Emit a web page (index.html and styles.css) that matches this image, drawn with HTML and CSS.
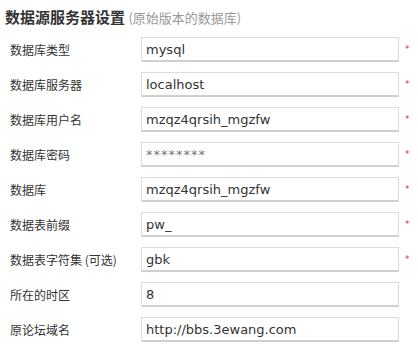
FILE: index.html
```html
<!DOCTYPE html>
<html>
<head>
<meta charset="utf-8">
<link rel="stylesheet" href="styles.css">
</head>
<body>
<div class="panel">
  <h3 class="title">数据源服务器设置 <span class="note">(原始版本的数据库)</span></h3>
  <div class="form">
    <div class="row"><label class="lbl">数据库类型</label><input class="field" type="text" value="mysql"><span class="req">*</span></div>
    <div class="row"><label class="lbl">数据库服务器</label><input class="field" type="text" value="localhost"><span class="req">*</span></div>
    <div class="row"><label class="lbl">数据库用户名</label><input class="field" type="text" value="mzqz4qrsih_mgzfw"><span class="req">*</span></div>
    <div class="row"><label class="lbl">数据库密码</label><input class="field pwd" type="text" value="********"><span class="req">*</span></div>
    <div class="row"><label class="lbl">数据库</label><input class="field" type="text" value="mzqz4qrsih_mgzfw"><span class="req">*</span></div>
    <div class="row"><label class="lbl">数据表前缀</label><input class="field" type="text" value="pw_"><span class="req">*</span></div>
    <div class="row"><label class="lbl">数据表字符集 (可选)</label><input class="field" type="text" value="gbk"><span class="req">*</span></div>
    <div class="row"><label class="lbl">所在的时区</label><input class="field" type="text" value="8"><span class="req"></span></div>
    <div class="row"><label class="lbl">原论坛域名</label><input class="field" type="text" value="http://bbs.3ewang.com"><span class="req"></span></div>
  </div>
</div>
</body>
</html>
```
FILE: styles.css
```css
html, body {
  margin: 0;
  padding: 0;
  background: #fff;
}
.panel {
  padding: 5px 0 0 0;
  font-family: "Noto Sans CJK SC", "DejaVu Sans", sans-serif;
  color: #333;
}
.title {
  margin: 0 0 0 5px;
  height: 26px;
  line-height: 24px;
  font-size: 15px;
  font-weight: bold;
  color: #333;
  white-space: nowrap;
}
.note {
  font-size: 13px;
  font-weight: normal;
  color: #999;
}
.form {
  display: flex;
  flex-direction: column;
  gap: 10px;
  padding-top: 6px;
}
.row {
  display: grid;
  grid-template-columns: 141px 258px 19px;
  align-items: center;
  height: 25px;
}
.lbl {
  padding-left: 10px;
  font-size: 12px;
  color: #333;
  white-space: nowrap;
}
.field {
  box-sizing: border-box;
  width: 258px;
  height: 25px;
  margin: 0;
  padding: 0 4px;
  border: 1px solid #dcdcdc;
  border-bottom: 2px solid #d0d0d0;
  font-family: "DejaVu Sans", Verdana, sans-serif;
  font-size: 13px;
  color: #333;
  background: #fff;
  outline: none;
}
.pwd {
  color: #777;
  letter-spacing: 1px;
}
.req {
  padding-left: 6px;
  font-family: "DejaVu Sans", sans-serif;
  font-size: 9px;
  color: #d0304a;
  align-self: start;
  margin-top: 7px;
}
```
